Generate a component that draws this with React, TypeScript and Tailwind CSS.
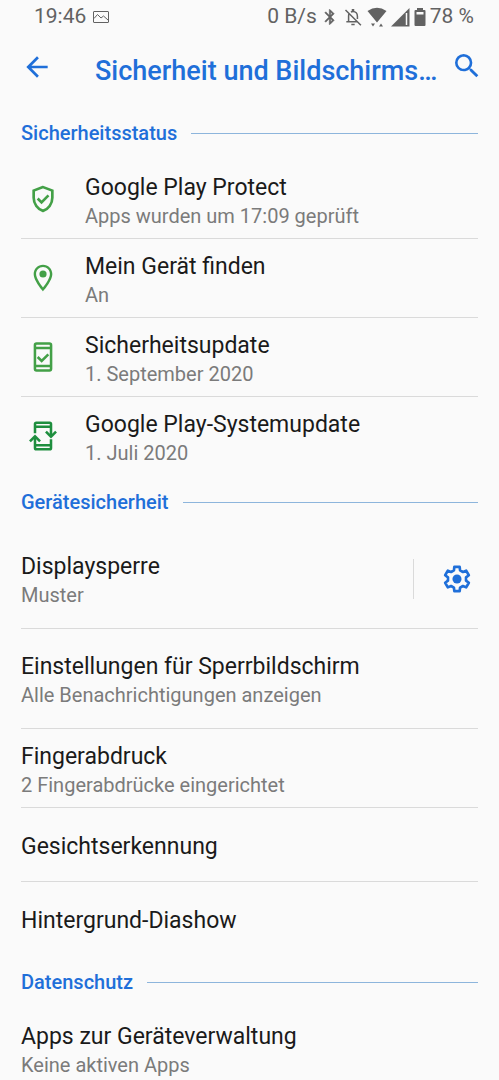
import React from "react";

const BackIcon = () => (
  <svg viewBox="0 0 24 24" className="size-8" fill="currentColor" aria-hidden="true">
    <path d="M20 11H7.83l5.59-5.59L12 4l-8 8 8 8 1.41-1.41L7.83 13H20v-2z" />
  </svg>
);

const SearchIcon = () => (
  <svg viewBox="0 0 24 24" className="size-8" fill="currentColor" aria-hidden="true">
    <path d="M15.5 14h-.79l-.28-.27A6.471 6.471 0 0 0 16 9.5 6.5 6.5 0 1 0 9.5 16c1.61 0 3.09-.59 4.23-1.57l.27.28v.79l5 4.99L20.49 19l-4.99-5zm-6 0C7.01 14 5 11.99 5 9.5S7.01 5 9.5 5 14 7.01 14 9.5 11.99 14 9.5 14z" />
  </svg>
);

const PictureIcon = () => (
  <svg viewBox="0 0 16 12" className="h-3 w-4" fill="none" stroke="currentColor" aria-hidden="true">
    <rect x="0.5" y="0.5" width="15" height="11" rx="0.5" />
    <path d="M1 7.5 4.5 3.5 8 7l2.5-2L15 9" />
  </svg>
);

const BluetoothIcon = () => (
  <svg viewBox="0 0 24 24" className="size-[18px]" fill="currentColor" stroke="currentColor" strokeWidth="0.6" aria-hidden="true">
    <path d="M17.71 7.71 12 2h-1v7.59L6.41 5 5 6.41 10.59 12 5 17.59 6.41 19 11 14.41V22h1l5.71-5.71-4.3-4.29 4.3-4.29zM13 5.83l1.88 1.88L13 9.59V5.83zm1.88 10.46L13 18.17v-3.76l1.88 1.88z" />
  </svg>
);

const BellOffIcon = () => (
  <svg viewBox="0 0 24 24" className="size-5" fill="none" stroke="currentColor" strokeWidth="1.8" aria-hidden="true">
    <path d="M3 3.5 21.5 22M7.3 8Q6.7 9.3 6.7 11v6.5M4 17.8h13.5M9.500 6Q10.7 5.4 12 5.4c3.2 0 5.3 2.5 5.3 5.6v3.5" />
    <path d="M10.5 2.5h3V5h-3zM10 20h4v1.8h-4z" fill="currentColor" stroke="none" />
  </svg>
);

const WifiIcon = () => (
  <svg viewBox="0 0 20 20" className="size-5" fill="currentColor" aria-hidden="true">
    <path d="M.5 4Q10-2.5 19.5 4L10 15.500zM4 16.500h4l-2 3zM12 19.500h4l-2-3z" />
  </svg>
);

const SignalIcon = () => (
  <svg viewBox="0 0 19 19" className="size-[19px]" aria-hidden="true">
    <path d="M0 18.5 18.5 0v18.5z" fill="currentColor" />
    <path d="M15.5 5v12" stroke="#fafafa" strokeWidth="1.5" />
  </svg>
);

const BatteryIcon = () => (
  <svg viewBox="0 0 12 18" className="h-[18px] w-3" aria-hidden="true">
    <path d="M3 0h6v2h1.5Q11.5 2 11.5 3v14q0 1-1 1h-9q-1 0-1-1V3q0-1 1-1H3z" fill="currentColor" />
    <path d="M2.5 4h7v2.5h-7z" fill="#fafafa" />
  </svg>
);

const ShieldIcon = () => (
  <svg viewBox="0 0 24 24" className="size-8" fill="none" stroke="currentColor" strokeWidth="2" aria-hidden="true">
    <path d="M12 3.05 5 5.7V11c0 4.5 3 8.7 7 9.9 4-1.2 7-5.4 7-9.9V5.7z" />
    <path d="m8 11.6 2.9 2.9 5.2-5.2" />
  </svg>
);

const PinIcon = () => (
  <svg viewBox="0 0 24 24" className="size-8" fill="currentColor" aria-hidden="true">
    <path d="M12 2C8.13 2 5 5.13 5 9c0 5.25 7 13 7 13s7-7.75 7-13c0-3.87-3.13-7-7-7zM6.8 9c0-2.87 2.33-5.2 5.2-5.2s5.2 2.33 5.2 5.2c0 2.88-3.08 7.49-5.2 10.18C9.92 16.51 6.8 11.85 6.8 9z" />
    <circle cx="12" cy="9" r="2.7" />
  </svg>
);

const PhoneCheckIcon = () => (
  <svg viewBox="0 0 24 24" className="size-8" fill="none" stroke="currentColor" strokeWidth="1.9" aria-hidden="true">
    <rect x="5.95" y="1.95" width="12.1" height="20.1" rx="1.2" />
    <path d="M6 5.2h12M6 18.8h12M8 12l3 3 5-5" />
  </svg>
);

const PhoneSyncIcon = () => (
  <svg viewBox="0 0 24 24" className="size-8" fill="none" stroke="currentColor" strokeWidth="1.9" aria-hidden="true">
    <path d="M6 10V3q0-1 1-1h10q1 0 1 1v9M6 5h12M18 14.5V21q0 1-1 1H7q-1 0-1-1v-8.5M6 19h12" />
    <path d="m14.2 8.7 3.8 3.8 3.8-3.8M2.2 16 6 12.2 9.8 16" />
  </svg>
);

const GearIcon = () => (
  <svg viewBox="0 0 24 24" className="size-8" aria-hidden="true">
    <path
      d="M9.7 5.5 10 2.9H14L14.3 5.5 16.48 6.76 18.88 5.72 20.88 9.18 18.78 10.74V13.26L20.88 14.82 18.88 18.28 16.48 17.24 14.3 18.5 14 21.1H10L9.7 18.5 7.52 17.24 5.12 18.28 3.12 14.82 5.22 13.26V10.74L3.12 9.18 5.12 5.72 7.52 6.76z"
      fill="none"
      stroke="currentColor"
      strokeWidth="2"
      strokeLinejoin="round"
    />
    <circle cx="12" cy="12" r="3.4" fill="currentColor" />
  </svg>
);

function SectionHeader({ children }: { children: string }) {
  return (
    <div className="mb-px flex h-[52px] items-center gap-3.5">
      <h2 className="text-[20px] leading-6 font-medium text-[#1f6fd9]">{children}</h2>
      <span className="h-px flex-1 bg-[#8db5dc]" />
    </div>
  );
}

type RowProps = {
  title: string;
  summary?: string;
  icon?: React.ReactNode;
  action?: React.ReactNode;
  height?: string;
};

function Row({ title, summary, icon, action, height = "min-h-[79px]" }: RowProps) {
  return (
    <li className={`flex items-center border-b border-[#dadada] last:border-transparent ${height}`}>
      <button type="button" className="flex min-w-0 flex-1 items-center text-left">
        {icon && <span className="w-16 shrink-0 pl-1.5">{icon}</span>}
        <span className="flex min-w-0 flex-col pt-1">
          <span className="text-[23px] leading-[29px] text-[#1a1a1a]">{title}</span>
          {summary && <span className="text-[20px] leading-7 text-[#7b7b7b]">{summary}</span>}
        </span>
      </button>
      {action}
    </li>
  );
}

export default function App() {
  return (
    <div className="flex h-screen flex-col overflow-hidden bg-[#fafafa] font-['Roboto',sans-serif]">
      <div className="flex h-[34px] shrink-0 items-center justify-between pr-[25px] pl-[34px] text-[21px] text-[#626262]">
        <div className="flex items-center gap-[7px]">
          <span>19:46</span>
          <PictureIcon />
        </div>
        <div className="flex items-center gap-1">
          <span>0 B/s</span>
          <BluetoothIcon />
          <BellOffIcon />
          <WifiIcon />
          <SignalIcon />
          <BatteryIcon />
          <span>78 %</span>
        </div>
      </div>
      <header className="flex h-[73px] shrink-0 items-start pr-4 pl-[21px] text-[#1f6fd9]">
        <button type="button" aria-label="Zurück" className="mt-[17px]">
          <BackIcon />
        </button>
        <h1 className="mt-[21px] ml-[42px] min-w-0 flex-1 truncate text-[27px] leading-8 font-medium">
          Sicherheit und Bildschirms…
        </h1>
        <button type="button" aria-label="Suchen" className="mt-4">
          <SearchIcon />
        </button>
      </header>
      <main className="min-h-0 flex-1 overflow-y-auto px-[21px] [scrollbar-width:none]">
        <section>
          <SectionHeader>Sicherheitsstatus</SectionHeader>
          <ul className="text-[#43a047]">
            <Row icon={<ShieldIcon />} title="Google Play Protect" summary="Apps wurden um 17:09 geprüft" />
            <Row icon={<PinIcon />} title="Mein Gerät finden" summary="An" />
            <Row icon={<PhoneCheckIcon />} title="Sicherheitsupdate" summary="1. September 2020" />
            <Row
              icon={<span className="text-[#1e8e3e]"><PhoneSyncIcon /></span>}
              title="Google Play-Systemupdate"
              summary="1. Juli 2020"
            />
          </ul>
        </section>
        <section>
          <SectionHeader>Gerätesicherheit</SectionHeader>
          <ul>
            <Row
              title="Displaysperre"
              summary="Muster"
              height="min-h-[100px]"
              action={
                <button
                  type="button"
                  aria-label="Displaysperre einrichten"
                  className="flex h-10 items-center border-l border-[#dadada] pr-[5px] pl-[27px] text-[#1f6fd9]"
                >
                  <GearIcon />
                </button>
              }
            />
            <Row
              title="Einstellungen für Sperrbildschirm"
              summary="Alle Benachrichtigungen anzeigen"
              height="min-h-[100px]"
            />
            <Row title="Fingerabdruck" summary="2 Fingerabdrücke eingerichtet" />
            <Row title="Gesichtserkennung" height="min-h-[74px]" />
            <Row title="Hintergrund-Diashow" height="min-h-[74px]" />
          </ul>
        </section>
        <section>
          <SectionHeader>Datenschutz</SectionHeader>
          <ul>
            <Row title="Apps zur Geräteverwaltung" summary="Keine aktiven Apps" />
          </ul>
        </section>
      </main>
    </div>
  );
}
